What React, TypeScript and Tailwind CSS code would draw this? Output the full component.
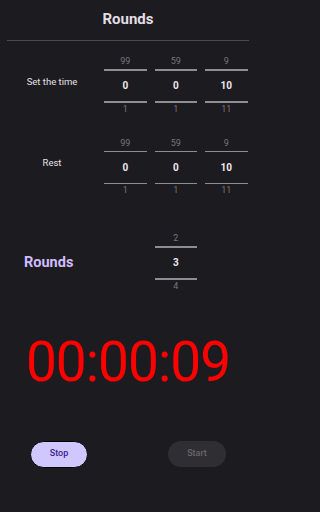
const PICKER_LINE = "h-[1.5px] w-full bg-[#8e8e90]";

type Col = { prev: string; value: string; next: string };

function NumberColumn({ col }: { col: Col }) {
  return (
    <div className="flex w-[42.5px] flex-col items-center">
      <div className="flex h-[14px] items-center text-[9px] text-[#77767b]">
        {col.prev}
      </div>
      <div className={PICKER_LINE} />
      <div className="flex h-[30.5px] items-center text-[10px] font-bold text-[#ece8ee]">
        {col.value}
      </div>
      <div className={PICKER_LINE} />
      <div className="flex h-[14px] items-center text-[9px] text-[#77767b]">
        {col.next}
      </div>
    </div>
  );
}

const TIME_COLS: Col[] = [
  { prev: "99", value: "0", next: "1" },
  { prev: "59", value: "0", next: "1" },
  { prev: "9", value: "10", next: "11" },
];

function TimeRow({ label }: { label: string }) {
  return (
    <div className="flex">
      <div className="flex w-[104px] items-center justify-center pb-[8px] text-[9.5px] text-[#e6e1e5]">
        {label}
      </div>
      <div className="flex gap-[8px]">
        {TIME_COLS.map((c, i) => (
          <NumberColumn key={i} col={c} />
        ))}
      </div>
    </div>
  );
}

export default function App() {
  return (
    <div className="min-h-screen w-full bg-[#1c1b1f]">
      <div
        className="flex min-h-[512px] w-[256px] flex-col"
        style={{ fontFamily: "Roboto, 'Liberation Sans', sans-serif" }}
      >
        <div className="flex h-[40px] items-center justify-center pb-[1px] text-[15px] font-bold text-[#e2dee4]">
          Rounds
        </div>
        <div className="mx-[7px] h-px bg-[#4a494e]" />

        <div className="mt-[14px]">
          <TimeRow label="Set the time" />
        </div>
        <div className="mt-[20px]">
          <TimeRow label="Rest" />
        </div>

        <div className="mt-[34px] flex">
          <div className="flex w-[104px] items-center pl-[24px] text-[14.5px] font-bold text-[#d0bcff]">
            Rounds
          </div>
          <div className="flex gap-[8px]">
            <div className="w-[42.5px]" />
            <NumberColumn col={{ prev: "2", value: "3", next: "4" }} />
          </div>
        </div>

        <div className="mt-[41px] text-center text-[55px] leading-none tracking-[-1px] text-[#ff0000]">
          00:00:09
        </div>

        <div className="mt-[51px] flex justify-between px-[30px]">
          <button className="flex h-[27px] w-[58px] items-center justify-center rounded-full border border-black bg-[#d0c7ff] text-[9px] font-medium text-[#381e90]">
            Stop
          </button>
          <button className="flex h-[26px] w-[58px] items-center justify-center rounded-full bg-[#2f2e33] text-[9px] font-medium text-[#68666c]">
            Start
          </button>
        </div>
      </div>
    </div>
  );
}
